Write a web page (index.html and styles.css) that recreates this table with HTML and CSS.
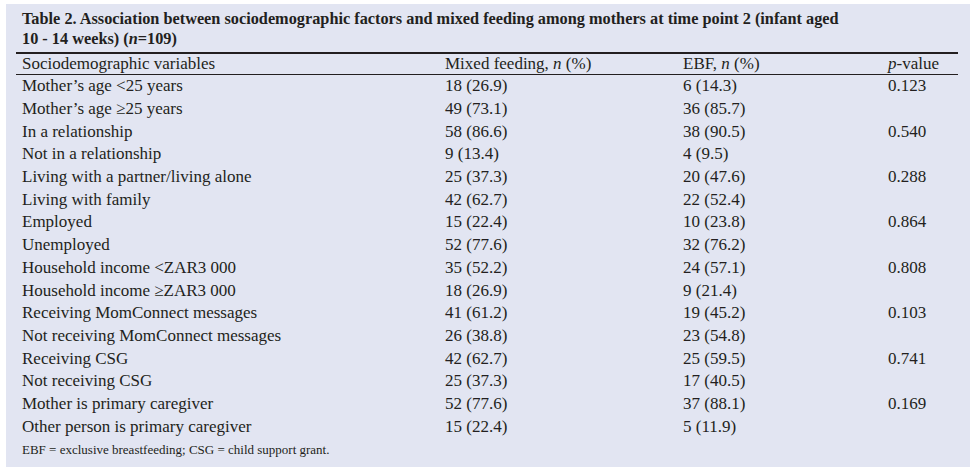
FILE: index.html
```html
<!DOCTYPE html>
<html lang="en">
<head>
<meta charset="utf-8">
<title>Table 2</title>
<link rel="stylesheet" href="styles.css">
</head>
<body>
<div class="panel">
  <div class="title">Table 2. Association between sociodemographic factors and mixed feeding among mothers at time point 2 (infant aged<br>10 - 14 weeks) (<i>n</i>=109)</div>
  <table class="tbl">
    <colgroup><col class="c1"><col class="c2"><col class="c3"><col class="c4"></colgroup>
    <thead>
      <tr><th>Sociodemographic variables</th><th>Mixed feeding, <i>n</i> (%)</th><th>EBF, <i>n</i> (%)</th><th><i>p</i>-value</th></tr>
    </thead>
    <tbody>
      <tr><td>Mother’s age &lt;25 years</td><td>18 (26.9)</td><td>6 (14.3)</td><td>0.123</td></tr>
      <tr><td>Mother’s age ≥25 years</td><td>49 (73.1)</td><td>36 (85.7)</td><td></td></tr>
      <tr><td>In a relationship</td><td>58 (86.6)</td><td>38 (90.5)</td><td>0.540</td></tr>
      <tr><td>Not in a relationship</td><td>9 (13.4)</td><td>4 (9.5)</td><td></td></tr>
      <tr><td>Living with a partner/living alone</td><td>25 (37.3)</td><td>20 (47.6)</td><td>0.288</td></tr>
      <tr><td>Living with family</td><td>42 (62.7)</td><td>22 (52.4)</td><td></td></tr>
      <tr><td>Employed</td><td>15 (22.4)</td><td>10 (23.8)</td><td>0.864</td></tr>
      <tr><td>Unemployed</td><td>52 (77.6)</td><td>32 (76.2)</td><td></td></tr>
      <tr><td>Household income &lt;ZAR3 000</td><td>35 (52.2)</td><td>24 (57.1)</td><td>0.808</td></tr>
      <tr><td>Household income ≥ZAR3 000</td><td>18 (26.9)</td><td>9 (21.4)</td><td></td></tr>
      <tr><td>Receiving MomConnect messages</td><td>41 (61.2)</td><td>19 (45.2)</td><td>0.103</td></tr>
      <tr><td>Not receiving MomConnect messages</td><td>26 (38.8)</td><td>23 (54.8)</td><td></td></tr>
      <tr><td>Receiving CSG</td><td>42 (62.7)</td><td>25 (59.5)</td><td>0.741</td></tr>
      <tr><td>Not receiving CSG</td><td>25 (37.3)</td><td>17 (40.5)</td><td></td></tr>
      <tr><td>Mother is primary caregiver</td><td>52 (77.6)</td><td>37 (88.1)</td><td>0.169</td></tr>
      <tr><td>Other person is primary caregiver</td><td>15 (22.4)</td><td>5 (11.9)</td><td></td></tr>
    </tbody>
  </table>
  <div class="note">EBF = exclusive breastfeeding; CSG = child support grant.</div>
</div>
</body>
</html>
```
FILE: styles.css
```css
html, body {
  margin: 0;
  padding: 0;
  background: #ffffff;
}
body {
  width: 974px;
  height: 473px;
  overflow: hidden;
  font-family: "Liberation Serif", "Times New Roman", serif;
  color: #231f20;
}
.panel {
  margin: 4px 0 0 6px;
  width: 964px;
  height: 463px;
  background: #e2e5f2;
  box-sizing: border-box;
  padding: 5px 12px 0 10px;
}
.title {
  font-weight: bold;
  font-size: 16.3px;
  line-height: 19.5px;
  padding-left: 6px;
  white-space: nowrap;
}
.tbl {
  margin-top: 4px;
  width: 942px;
  table-layout: fixed;
  border-collapse: collapse;
  font-size: 17px;
}
.c1 { width: 423px; }
.c2 { width: 238px; }
.c3 { width: 205px; }
.c4 { width: 76px; }
.tbl th, .tbl td {
  text-align: left;
  font-weight: normal;
  padding: 0 0 0 6px;
  height: 22.7px;
  line-height: 18px;
  vertical-align: middle;
  white-space: nowrap;
}
.tbl tbody tr {
  height: 22.7px;
}
.tbl th {
  border-top: 2.5px solid #231f20;
  border-bottom: 1.5px solid #231f20;
  height: 20px;
}
.note {
  font-size: 13px;
  margin-top: 4px;
  padding-left: 6px;
}
```
